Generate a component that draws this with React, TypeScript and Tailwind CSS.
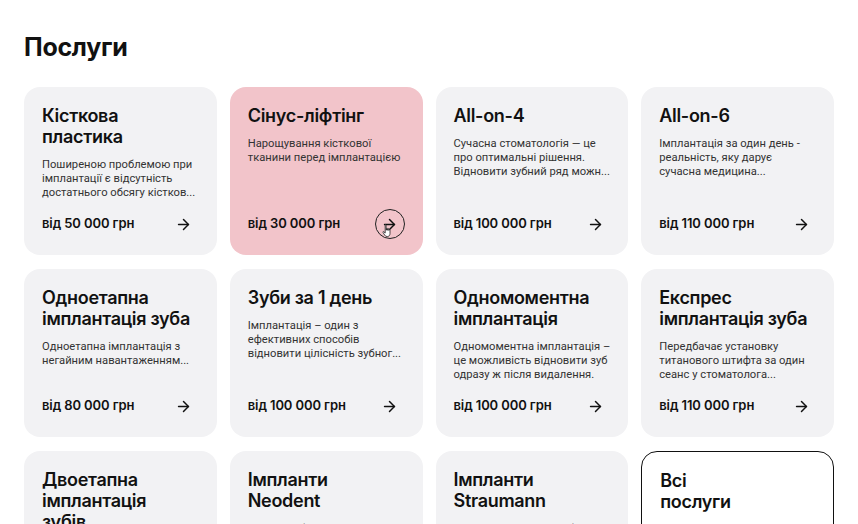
import React from 'react';
import { ArrowRight } from 'lucide-react';

type Service = {
  title: string[];
  description: string[];
  price: string;
  active?: boolean;
};

const services: Service[] = [
  {
    title: ['Кісткова', 'пластика'],
    description: ['Поширеною проблемою при', 'імплантації є відсутність', 'достатнього обсягу кістков...'],
    price: 'від 50 000 грн',
  },
  {
    title: ['Сінус-ліфтінг'],
    description: ['Нарощування кісткової', 'тканини перед імплантацією'],
    price: 'від 30 000 грн',
    active: true,
  },
  {
    title: ['All-on-4'],
    description: ['Сучасна стоматологія — це', 'про оптимальні рішення.', 'Відновити зубний ряд можн...'],
    price: 'від 100 000 грн',
  },
  {
    title: ['All-on-6'],
    description: ['Імплантація за один день -', 'реальність, яку дарує', 'сучасна медицина...'],
    price: 'від 110 000 грн',
  },
  {
    title: ['Одноетапна', 'імплантація зуба'],
    description: ['Одноетапна імплантація з', 'негайним навантаженням...'],
    price: 'від 80 000 грн',
  },
  {
    title: ['Зуби за 1 день'],
    description: ['Імплантація – один з', 'ефективних способів', 'відновити цілісність зубног...'],
    price: 'від 100 000 грн',
  },
  {
    title: ['Одномоментна', 'імплантація'],
    description: ['Одномоментна імплантація –', 'це можливість відновити зуб', 'одразу ж після видалення.'],
    price: 'від 100 000 грн',
  },
  {
    title: ['Експрес', 'імплантація зуба'],
    description: ['Передбачає установку', 'титанового штифта за один', 'сеанс у стоматолога...'],
    price: 'від 110 000 грн',
  },
  {
    title: ['Двоетапна', 'імплантація', 'зубів'],
    description: ['Класичний метод', 'імплантації...'],
    price: 'від 90 000 грн',
  },
  {
    title: ['Імпланти', 'Neodent'],
    description: ['Імпланти бразильського', 'виробника...'],
    price: 'від 60 000 грн',
  },
  {
    title: ['Імпланти', 'Straumann'],
    description: ['Світовий лідер у виробництві', 'дентальних імплантів...'],
    price: 'від 70 000 грн',
  },
];

// Mouse pointer hovering over the active card's button
const HandCursor = () => (
  <svg
    className="absolute left-[6px] top-[14px] w-[12px] h-[14px]"
    viewBox="0 0 12 14"
    fill="none"
  >
    <path
      d="M3.2 1.2c0-.6.9-.6.9 0v5l.4-.2V4.6c0-.6.9-.6.9 0v1.6l.4-.1V5c0-.6.9-.6.9 0v1.3l.4-.1c0-.6.9-.6.9 0v3.4c0 1.6-1 2.9-2.6 2.9H5c-1 0-1.7-.5-2.3-1.4L1 8.4c-.4-.6.3-1.2.8-.7l1.4 1.3V1.2z"
      fill="#fff"
      stroke="#222"
      strokeWidth="0.8"
      strokeLinejoin="round"
    />
  </svg>
);

const ServiceCard: React.FC<{ service: Service }> = ({ service }) => (
  <div
    className={`h-[168px] rounded-[16px] px-[18px] pt-[18px] pb-[16px] flex flex-col ${
      service.active ? 'bg-[#f2c4ca]' : 'bg-[#f2f2f4]'
    }`}
  >
    <h3 className="text-[18px] leading-[21px] font-semibold text-[#111] tracking-[-0.3px]">
      {service.title.map((line) => (
        <span key={line} className="block whitespace-nowrap">
          {line}
        </span>
      ))}
    </h3>
    <p
      className="mt-[11px] text-[11.2px] leading-[14px] text-[#333]"
      style={{ fontFamily: 'Roboto, "Noto Sans", sans-serif' }}
    >
      {service.description.map((line) => (
        <span key={line} className="block whitespace-nowrap">
          {line}
        </span>
      ))}
    </p>
    <div className="mt-auto flex items-center justify-between">
      <span className="text-[13px] font-semibold text-[#111] tracking-[-0.1px]">{service.price}</span>
      <button
        className={`relative w-[30px] h-[30px] rounded-full flex items-center justify-center ${
          service.active ? 'border border-[#222]' : ''
        }`}
      >
        <ArrowRight className="w-[17px] h-[17px] text-[#111]" strokeWidth={2.1} />
        {service.active && <HandCursor />}
      </button>
    </div>
  </div>
);

export default function App() {
  return (
    <div
      className="min-h-screen bg-white px-6 pt-[31px] pb-10"
      style={{ fontFamily: 'Inter, "Noto Sans", sans-serif' }}
    >
      <h2 className="text-[25px] leading-[32px] font-bold text-[#111] tracking-[-0.3px]">Послуги</h2>
      <div className="mt-[24px] grid grid-cols-4 gap-x-[13px] gap-y-[14px]">
        {services.map((s) => (
          <ServiceCard key={s.title.join(' ')} service={s} />
        ))}
        <div className="h-[168px] rounded-[16px] border border-[#111] bg-white p-[18px]">
          <h3 className="text-[18px] leading-[21px] font-semibold text-[#111] tracking-[-0.3px]">
            <span className="block">Всі</span>
            <span className="block">послуги</span>
          </h3>
        </div>
      </div>
    </div>
  );
}
